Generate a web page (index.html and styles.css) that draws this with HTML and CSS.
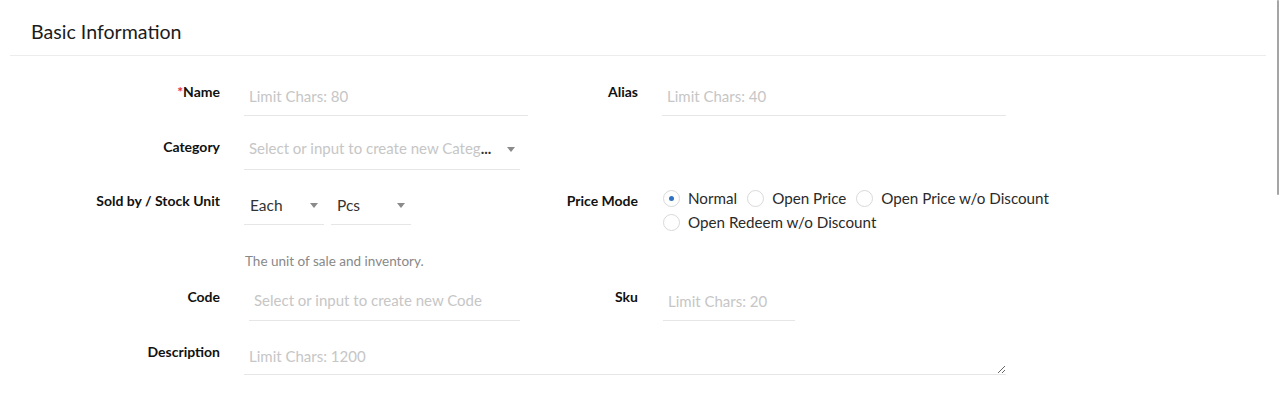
FILE: index.html
```html
<!DOCTYPE html>
<html lang="en">
<head>
  <meta charset="UTF-8" />
  <meta name="viewport" content="width=device-width, initial-scale=1.0" />
  <title>Basic Information</title>
  <link rel="stylesheet" href="styles.css">
</head>
<body>
  <div class="card">
    <header class="card-head">
      <h2>Basic Information</h2>
    </header>

    <div class="form">
      <label class="label" for="name"><span class="req">*</span>Name</label>
      <div class="field">
        <input type="text" id="name" class="text-input w-name" placeholder="Limit Chars: 80">
      </div>
      <label class="label" for="alias">Alias</label>
      <div class="field">
        <input type="text" id="alias" class="text-input w-full" placeholder="Limit Chars: 40">
      </div>

      <label class="label">Category</label>
      <div class="field">
        <div class="select w-category">
          <span class="placeholder">Select or input to create new Categ<span class="dots">...</span></span>
          <span class="caret"></span>
        </div>
      </div>
      <div class="label"></div>
      <div class="field"></div>

      <label class="label">Sold by / Stock Unit</label>
      <div class="field">
        <div class="unit-group">
          <div class="select w-unit">
            <span class="value">Each</span>
            <span class="caret"></span>
          </div>
          <div class="select w-unit">
            <span class="value">Pcs</span>
            <span class="caret"></span>
          </div>
        </div>
        <div class="help">The unit of sale and inventory.</div>
      </div>
      <label class="label">Price Mode</label>
      <div class="field">
        <div class="radio-group">
          <div class="radio-line">
            <label class="radio"><span class="dot checked"></span>Normal</label>
            <label class="radio"><span class="dot"></span>Open Price</label>
            <label class="radio"><span class="dot"></span>Open Price w/o Discount</label>
          </div>
          <div class="radio-line">
            <label class="radio"><span class="dot"></span>Open Redeem w/o Discount</label>
          </div>
        </div>
      </div>

      <label class="label" for="code">Code</label>
      <div class="field">
        <input type="text" id="code" class="text-input w-code" placeholder="Select or input to create new Code">
      </div>
      <label class="label" for="sku">Sku</label>
      <div class="field">
        <input type="text" id="sku" class="text-input w-sku" placeholder="Limit Chars: 20">
      </div>

      <label class="label" for="desc">Description</label>
      <div class="field span-3">
        <textarea id="desc" class="text-area" placeholder="Limit Chars: 1200"></textarea>
      </div>
    </div>
  </div>
  <div class="scroll-thumb"></div>
</body>
</html>
```

FILE: styles.css
```css
:root {
  --text-color: #222;
  --muted: #888;
  --placeholder: #c6c6c6;
  --line: #e6e6e6;
  --accent: #2f72c4;
}
html, body {
  margin: 0;
  background: #fff;
}
body {
  font-family: "Lato", "Liberation Sans", sans-serif;
  color: var(--text-color);
  overflow: hidden;
}
.card {
  margin: 0 14px 0 10px;
}
.card-head {
  padding: 18px 0 9px 21px;
  border-bottom: 1px solid #ececec;
}
.card-head h2 {
  margin: 0;
  font-size: 19.6px;
  font-weight: 400;
  line-height: 28px;
  color: #1c1c1c;
}
.form {
  display: grid;
  grid-template-columns: 210px 284px 86px 344px;
  column-gap: 24px;
  row-gap: 15px;
  padding-top: 20px;
}
.label {
  font-size: 14px;
  font-weight: 700;
  line-height: 32px;
  text-align: right;
  color: #111;
  white-space: nowrap;
}
.req {
  color: #e8312a;
}
.field {
  min-width: 0;
}
.span-3 {
  grid-column: span 3;
}
.text-input {
  display: block;
  height: 40px;
  padding: 0 5px;
  border: none;
  border-bottom: 1px solid var(--line);
  font-family: inherit;
  font-size: 15px;
  color: var(--text-color);
  background: transparent;
  box-sizing: border-box;
  outline: none;
}
.text-input::placeholder,
.text-area::placeholder {
  color: var(--placeholder);
}
.w-name { width: 284px; }
.w-full { width: 344px; }
.w-code { width: 271px; margin-left: 5px; padding-bottom: 1px; }
.w-sku { width: 132px; margin-left: 1px; }
.select {
  display: flex;
  align-items: center;
  height: 39px;
  padding: 0 5px;
  border-bottom: 1px solid var(--line);
  box-sizing: border-box;
  font-size: 15px;
}
.select .caret {
  margin-left: auto;
}
.w-category { width: 276px; padding-bottom: 4px; }
.w-unit { width: 80px; height: 40px; padding-left: 6px; padding-right: 6px; }
.placeholder {
  color: var(--placeholder);
  white-space: nowrap;
}
.dots {
  color: #333;
  font-weight: 700;
}
.value {
  color: #333;
  font-size: 15.5px;
}
.caret {
  width: 0;
  height: 0;
  border-left: 4px solid transparent;
  border-right: 4px solid transparent;
  border-top: 5px solid #8a8a8a;
  margin-top: 2px;
}
.unit-group {
  display: flex;
  gap: 7px;
}
.help {
  margin: 26px 0 -5px 1px;
  font-size: 13.5px;
  line-height: 20px;
  color: var(--muted);
  white-space: nowrap;
}
.radio-group {
  padding-top: 1px;
  white-space: nowrap;
}
.radio-line {
  display: flex;
  gap: 10px;
  margin-left: 1px;
}
.radio {
  display: flex;
  align-items: center;
  gap: 8px;
  font-size: 15.2px;
  line-height: 24px;
  color: #2a2a2a;
}
.dot {
  width: 17px;
  height: 17px;
  border: 1px solid #d9d9d9;
  border-radius: 50%;
  box-sizing: border-box;
  display: flex;
  align-items: center;
  justify-content: center;
}
.dot.checked::after {
  content: "";
  width: 5px;
  height: 5px;
  border-radius: 50%;
  background: var(--accent);
}
.text-area {
  display: block;
  width: 762px;
  height: 39px;
  padding: 10px 5px 0;
  border: none;
  border-bottom: 1px solid var(--line);
  font-family: inherit;
  font-size: 15px;
  line-height: 20px;
  box-sizing: border-box;
  outline: none;
  resize: vertical;
}
.scroll-thumb {
  position: fixed;
  top: 0;
  right: 1px;
  width: 2px;
  height: 195px;
  background: #a5a5a5;
  border-radius: 1px;
}
```
